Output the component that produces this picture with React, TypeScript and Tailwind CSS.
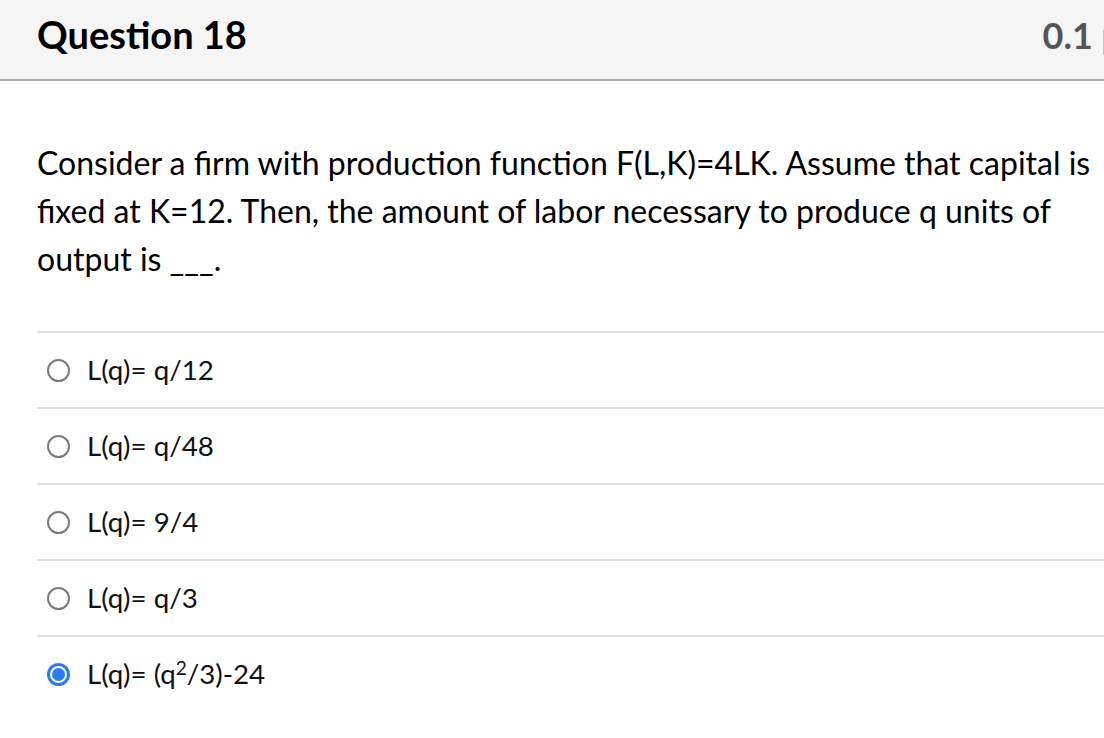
const options = [
  { id: "a", label: <>L(q)= q/12</> },
  { id: "b", label: <>L(q)= q/48</> },
  { id: "c", label: <>L(q)= 9/4</> },
  { id: "d", label: <>L(q)= q/3</> },
  {
    id: "e",
    label: (
      <>
        L(q)= (q<sup className="text-[19px]">2</sup>/3)-24
      </>
    ),
  },
];

const Radio = ({ checked }: { checked: boolean }) =>
  checked ? (
    <span className="flex h-[23px] w-[23px] items-center justify-center rounded-full border-[3px] border-[#2b7bf3] bg-white">
      <span className="h-[13px] w-[13px] rounded-full bg-[#2b7bf3]" />
    </span>
  ) : (
    <span className="h-[23px] w-[23px] rounded-full border-2 border-[#7a7a7a] bg-white" />
  );

export default function App() {
  const selected = "e";
  return (
    <div
      className="h-[738px] w-[1104px] overflow-hidden bg-white text-black"
      style={{ fontFamily: "Lato, 'Noto Sans', sans-serif" }}
    >
      <div className="flex h-[81px] w-[1156px] items-center justify-between border-b-2 border-[#a9a9a9] bg-[#f5f5f5] pb-[10px] pl-[37px] pr-[5px]">
        <h2 className="text-[38px] font-bold text-black">Question 18</h2>
        <span className="text-[36px] font-bold text-[#555]">0.1 pts</span>
      </div>

      <div className="pl-[37px] pt-[58px]">
        <p className="w-[1064px] text-[32px] leading-[48px]">
          Consider a firm with production function F(L,K)=4LK. Assume that capital is fixed at K=12.
          Then, the amount of labor necessary to produce q units of output is ___.
        </p>

        <ul className="mt-[48px]">
          {options.map((o) => (
            <li
              key={o.id}
              className="flex h-[76px] items-center gap-[17px] border-t-2 border-[#dedede] pl-[10px]"
            >
              <Radio checked={o.id === selected} />
              <span className="text-[27.7px] text-[#111]">{o.label}</span>
            </li>
          ))}
        </ul>
      </div>
    </div>
  );
}
